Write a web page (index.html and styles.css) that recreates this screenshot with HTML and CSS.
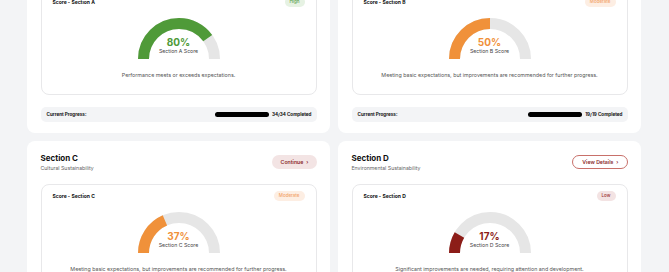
FILE: index.html
```html
<!DOCTYPE html>
<html lang="en">
<head>
    <meta charset="UTF-8">
    <meta name="viewport" content="width=device-width, initial-scale=1.0">
    <title>Assessment Sections</title>
    <link rel="stylesheet" href="styles.css">
</head>
<body>

<main class="sections">

    <!-- Section A -->
    <section class="card">
        <header class="card-head">
            <div>
                <h2>Section A</h2>
                <p>Economic Sustainability</p>
            </div>
            <button class="btn btn-soft">Continue<span class="chev">›</span></button>
        </header>
        <div class="score-box">
            <div class="score-head">
                <span>Score - Section A</span>
                <span class="badge badge-high">High</span>
            </div>
            <div class="gauge">
                <svg width="82" height="41" viewBox="0 0 82 41">
                    <path class="track" d="M 5.5 41 A 35.5 35.5 0 0 1 76.5 41" pathLength="100"/>
                    <path class="fill-high" d="M 5.5 41 A 35.5 35.5 0 0 1 76.5 41" pathLength="100" stroke-dasharray="80 100"/>
                </svg>
                <div class="gauge-text">
                    <div class="pct text-high">80%</div>
                    <div class="pct-label">Section A Score</div>
                </div>
            </div>
            <p class="score-desc">Performance meets or exceeds expectations.</p>
        </div>
        <div class="progress">
            <span>Current Progress:</span>
            <div class="progress-right">
                <span class="bar"></span>
                <span>34/34 Completed</span>
            </div>
        </div>
    </section>

    <!-- Section B -->
    <section class="card">
        <header class="card-head">
            <div>
                <h2>Section B</h2>
                <p>Social Sustainability</p>
            </div>
            <button class="btn btn-outline">View Details<span class="chev">›</span></button>
        </header>
        <div class="score-box">
            <div class="score-head">
                <span>Score - Section B</span>
                <span class="badge badge-mid">Moderate</span>
            </div>
            <div class="gauge">
                <svg width="82" height="41" viewBox="0 0 82 41">
                    <path class="track" d="M 5.5 41 A 35.5 35.5 0 0 1 76.5 41" pathLength="100"/>
                    <path class="fill-mid" d="M 5.5 41 A 35.5 35.5 0 0 1 76.5 41" pathLength="100" stroke-dasharray="50 100"/>
                </svg>
                <div class="gauge-text">
                    <div class="pct text-mid">50%</div>
                    <div class="pct-label">Section B Score</div>
                </div>
            </div>
            <p class="score-desc">Meeting basic expectations, but improvements are recommended for further progress.</p>
        </div>
        <div class="progress">
            <span>Current Progress:</span>
            <div class="progress-right">
                <span class="bar"></span>
                <span>19/19 Completed</span>
            </div>
        </div>
    </section>

    <!-- Section C -->
    <section class="card">
        <header class="card-head">
            <div>
                <h2>Section C</h2>
                <p>Cultural Sustainability</p>
            </div>
            <button class="btn btn-soft">Continue<span class="chev">›</span></button>
        </header>
        <div class="score-box">
            <div class="score-head">
                <span>Score - Section C</span>
                <span class="badge badge-mid">Moderate</span>
            </div>
            <div class="gauge">
                <svg width="82" height="41" viewBox="0 0 82 41">
                    <path class="track" d="M 5.5 41 A 35.5 35.5 0 0 1 76.5 41" pathLength="100"/>
                    <path class="fill-mid" d="M 5.5 41 A 35.5 35.5 0 0 1 76.5 41" pathLength="100" stroke-dasharray="37 100"/>
                </svg>
                <div class="gauge-text">
                    <div class="pct text-mid">37%</div>
                    <div class="pct-label">Section C Score</div>
                </div>
            </div>
            <p class="score-desc">Meeting basic expectations, but improvements are recommended for further progress.</p>
        </div>
        <div class="progress">
            <span>Current Progress:</span>
            <div class="progress-right">
                <span class="bar"></span>
                <span>12/12 Completed</span>
            </div>
        </div>
    </section>

    <!-- Section D -->
    <section class="card">
        <header class="card-head">
            <div>
                <h2>Section D</h2>
                <p>Environmental Sustainability</p>
            </div>
            <button class="btn btn-outline">View Details<span class="chev">›</span></button>
        </header>
        <div class="score-box">
            <div class="score-head">
                <span>Score - Section D</span>
                <span class="badge badge-low">Low</span>
            </div>
            <div class="gauge">
                <svg width="82" height="41" viewBox="0 0 82 41">
                    <path class="track" d="M 5.5 41 A 35.5 35.5 0 0 1 76.5 41" pathLength="100"/>
                    <path class="fill-low" d="M 5.5 41 A 35.5 35.5 0 0 1 76.5 41" pathLength="100" stroke-dasharray="17 100"/>
                </svg>
                <div class="gauge-text">
                    <div class="pct text-low">17%</div>
                    <div class="pct-label">Section D Score</div>
                </div>
            </div>
            <p class="score-desc">Significant improvements are needed, requiring attention and development.</p>
        </div>
        <div class="progress">
            <span>Current Progress:</span>
            <div class="progress-right">
                <span class="bar"></span>
                <span>8/8 Completed</span>
            </div>
        </div>
    </section>

</main>

</body>
</html>
```

FILE: styles.css
```css
body {
    margin: 0;
    background-color: #f3f4f6;
    font-family: Inter, "Noto Sans", sans-serif;
    color: #111;
}
.sections {
    display: grid;
    grid-template-columns: 303px 303px;
    gap: 8px;
    padding: 0 28px 0 27px;
    margin-top: -53px;
}
.card {
    background-color: #fff;
    border-radius: 8px;
    padding: 12px 13.5px 11px;
    display: flex;
    flex-direction: column;
}
.card-head {
    display: flex;
    justify-content: space-between;
    align-items: flex-start;
    height: 19px;
    margin-bottom: 12px;
}
.card-head h2 {
    margin: 0;
    font-size: 8px;
    line-height: 10px;
    font-weight: 700;
}
.card-head p {
    margin: 2px 0 0;
    font-size: 5.2px;
    line-height: 7px;
    color: #666;
}
.btn {
    height: 14px;
    margin-top: 2px;
    padding: 0 8px 0 9px;
    border-radius: 7px;
    font-family: inherit;
    font-size: 5.2px;
    font-weight: 600;
    color: #8b2a2a;
    cursor: pointer;
}
.chev {
    margin-left: 3px;
}
.btn-soft {
    background-color: #f3e4e4;
    border: none;
}
.btn-outline {
    background-color: #fff;
    border: 1px solid #c8706a;
}
.score-box {
    border: 1px solid #e8e8ea;
    border-radius: 8px;
    padding: 6px 11px 15px;
    display: flex;
    flex-direction: column;
    align-items: center;
}
.score-head {
    align-self: stretch;
    display: flex;
    justify-content: space-between;
    align-items: center;
    height: 10px;
    font-size: 5px;
    font-weight: 700;
}
.badge {
    height: 10px;
    line-height: 10px;
    padding: 0 5px;
    border-radius: 5px;
    font-size: 4.5px;
    font-weight: 500;
}
.badge-high {
    background-color: #e6f2e3;
    color: #5a9e48;
}
.badge-mid {
    background-color: #fdeee3;
    color: #f2a46a;
}
.badge-low {
    background-color: #f3e3e3;
    color: #9b3030;
}
.gauge {
    position: relative;
    width: 82px;
    height: 41px;
    margin-top: 11px;
}
.gauge svg {
    display: block;
}
.gauge path {
    fill: none;
    stroke-width: 11;
}
.track {
    stroke: #e6e6e6;
}
.fill-high {
    stroke: #4f9a38;
}
.fill-mid {
    stroke: #f0913a;
}
.fill-low {
    stroke: #8c1d18;
}
.gauge-text {
    position: absolute;
    top: 18px;
    left: 0;
    right: 0;
    text-align: center;
}
.pct {
    font-size: 10px;
    line-height: 12px;
    font-weight: 700;
}
.text-high {
    color: #4f9a38;
}
.text-mid {
    color: #f0913a;
}
.text-low {
    color: #8c1d18;
}
.pct-label {
    font-size: 5.2px;
    line-height: 7px;
    color: #444;
}
.score-desc {
    margin: 12px 0 0;
    font-size: 5.3px;
    line-height: 8px;
    color: #555;
    text-align: center;
}
.progress {
    margin-top: 12px;
    height: 15px;
    padding: 0 5px 0 6px;
    background-color: #f3f4f6;
    border-radius: 5px;
    display: flex;
    justify-content: space-between;
    align-items: center;
    font-size: 4.6px;
    font-weight: 700;
}
.progress-right {
    display: flex;
    align-items: center;
    gap: 3px;
}
.bar {
    width: 54px;
    height: 5px;
    border-radius: 3px;
    background-color: #000;
}
```
